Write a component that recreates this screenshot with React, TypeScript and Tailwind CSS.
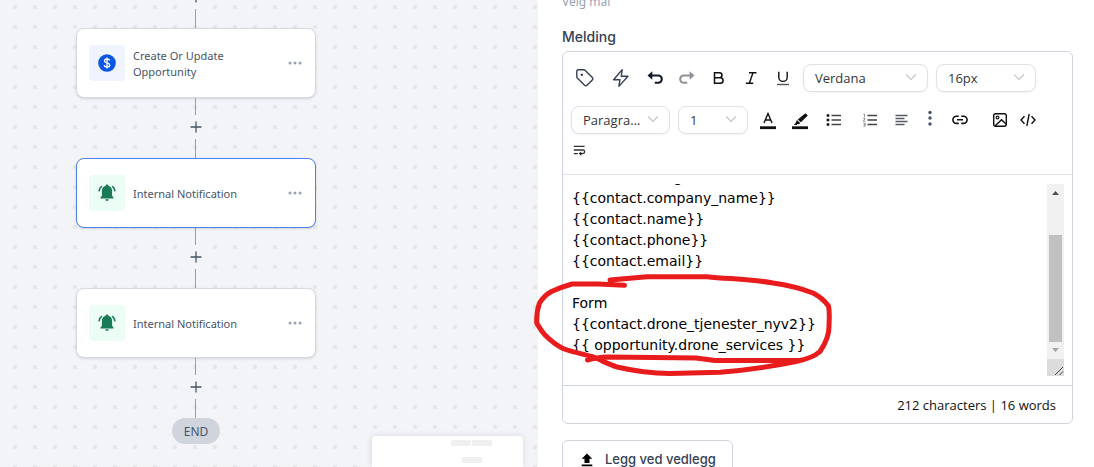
import type { ReactNode } from 'react';

const bodyText = `Drone bestilling
{{contact.company_name}}
{{contact.name}}
{{contact.phone}}
{{contact.email}}

Form
{{contact.drone_tjenester_nyv2}}
{{ opportunity.drone_services }}`;

function BellIcon() {
  return (
    <svg width="20" height="20" viewBox="0 0 20 20" fill="#1b7a58">
      <path d="M10 1.6c.8 0 1.3.5 1.4 1.2 2.3.6 3.7 2.5 3.7 5v5l1.4 1.6v1H3.5v-1l1.4-1.6v-5c0-2.5 1.4-4.4 3.7-5 .1-.7.6-1.2 1.4-1.2zM8.3 16.3h3.4c0 1-.7 1.7-1.7 1.7s-1.7-.7-1.7-1.7z" />
      <path d="M4.9 3.2C3.2 4.400 2.200 6.200 2 8.300M15.100 3.200c1.700 1.200 2.700 3 2.900 5.100" fill="none" stroke="#1b7a58" strokeWidth="1.600" />
    </svg>
  );
}

function DollarIcon() {
  return (
    <svg width="20" height="20" viewBox="0 0 20 20" fill="none">
      <circle cx="10" cy="10" r="8.800" fill="#0b57e3" />
      <path d="M12.600 7.700c-.2-1.100-1.200-1.700-2.600-1.700s-2.500.7-2.500 1.900c0 2.700 5.200 1.300 5.200 4.100 0 1.200-1.100 2-2.700 2-1.500 0-2.600-.7-2.800-1.900M10 4.500v11" stroke="#fff" strokeWidth="1.300" />
    </svg>
  );
}

function Connector() {
  return (
    <div className="flex h-15 flex-col items-center pr-px">
      <div className="h-[17px] w-px bg-[#98a0a8]" />
      <button type="button" aria-label="Add step" className="flex h-6 w-6 items-center justify-center bg-[#f2f4f7]">
        <svg width="12" height="12" viewBox="0 0 12 12" stroke="#475467" strokeWidth="1.3">
          <path d="M6 .5v11M.5 6h11" />
        </svg>
      </button>
      <div className="w-px flex-1 bg-[#98a0a8]" />
    </div>
  );
}

function StepCard({ label, tint, active, children }: { label: string; tint: string; active?: boolean; children: ReactNode }) {
  return (
    <div
      className={`flex h-[70px] w-60 items-center rounded-lg border bg-white px-3 shadow-sm ${active ? 'border-[#4d82ee]' : 'border-[#d5d9e0]'}`}
    >
      <div className={`flex h-9 w-9 shrink-0 items-center justify-center rounded ${tint}`}>{children}</div>
      <p className="ml-2 w-32 pt-px text-[11px] leading-4 text-[#475467]">{label}</p>
      <button type="button" aria-label="Step options" className="ml-auto">
        <svg width="16" height="16" viewBox="0 0 16 16" fill="#98a2b3">
          <circle cx="3" cy="8" r="1.500" />
          <circle cx="8" cy="8" r="1.500" />
          <circle cx="13" cy="8" r="1.500" />
        </svg>
      </button>
    </div>
  );
}

function Dropdown({ label, value, width }: { label: string; value: string; width: string }) {
  return (
    <div className={`relative ${width}`}>
      <select
        aria-label={label}
        className="h-7 w-full appearance-none overflow-hidden rounded-lg border border-[#dfe1e6] bg-white pt-[2px] pr-6 pl-[11px] font-['Open_Sans',sans-serif] text-[13px] text-ellipsis whitespace-nowrap text-[#333639] shadow-xs"
      >
        <option>{value}</option>
      </select>
      <svg className="pointer-events-none absolute top-2 right-3" width="10" height="10" viewBox="0 0 10 10" fill="none" stroke="#c2c2c8" strokeWidth="1.100">
        <path d="M0 2.500l5 5 5-5" />
      </svg>
    </div>
  );
}

function Tool({ label, width = 'w-8', children }: { label: string; width?: string; children: ReactNode }) {
  return (
    <button type="button" aria-label={label} className={`flex h-7 shrink-0 items-center justify-center ${width}`}>
      <svg width="20" height="20" viewBox="0 0 20 20" fill="none" stroke="#101010" strokeWidth="1.400">
        {children}
      </svg>
    </button>
  );
}

function Toolbar() {
  return (
    <div className="flex flex-col border-b border-[#e0e2e6] px-2 pt-3 pb-[10px]">
      <div className="flex items-center">
        <Tool label="Tags" width="w-7">
          <path d="M1.800 3.300v5.500c0 .5.200.9.500 1.200l7.300 7.300c.7.700 1.700.7 2.400 0l5.300-5.300c.7-.7.700-1.700 0-2.400L10 2.300c-.3-.3-.7-.5-1.200-.5H3.300c-.8 0-1.500.7-1.500 1.500z" stroke="#344054" strokeLinejoin="round" />
          <circle cx="6.800" cy="6.800" r="1.200" fill="#344054" stroke="none" />
        </Tool>
        <Tool label="Triggers" width="w-11">
          <path d="M11.200 1.600L2.600 11.800h6.300l-1 6.600 9-10.200h-6.600l.9-6.600z" stroke="#344054" strokeLinejoin="round" />
        </Tool>
        <Tool label="Undo" width="w-6">
          <path d="M4 7.500h9.200a3.600 3.600 0 010 7.200h-3.400" stroke="#101828" strokeWidth="2.100" />
          <path d="M7.300 3.200v8.600L2.500 7.500z" fill="#101828" stroke="none" />
        </Tool>
        <Tool label="Redo" width="w-10">
          <path d="M16 7.500H6.800a3.600 3.600 0 000 7.200h3.400" stroke="#8e9196" strokeWidth="2.100" />
          <path d="M12.700 3.200v8.600l4.800-4.300z" fill="#8e9196" stroke="none" />
        </Tool>
        <Tool label="Bold" width="w-6">
          <path d="M5.500 4.700h5a2.500 2.500 0 010 5h-5zM5.500 9.700h5.800a2.800 2.800 0 010 5.600H5.500z" strokeWidth="1.500" />
        </Tool>
        <Tool label="Italic" width="w-10">
          <path d="M8 4.700h7.500M4.800 15.300h7.400M12 4.700L8.300 15.300" />
        </Tool>
        <Tool label="Underline" width="w-6">
          <path d="M5.800 3.700v5.500a4.200 4.200 0 008.400 0V3.700" />
          <path d="M4 16.500h12" stroke="#555" />
        </Tool>
        <div className="ml-2 flex gap-2">
          <Dropdown label="Font family" value="Verdana" width="w-[125px]" />
          <Dropdown label="Font size" value="16px" width="w-[100px]" />
        </div>
      </div>
      <div className="mt-[14px] flex items-center">
        <div className="flex gap-2">
          <Dropdown label="Block type" value="Paragraph" width="w-[99px]" />
          <Dropdown label="Line height" value="1" width="w-[70px]" />
        </div>
        <Tool label="Text colour" width="ml-1 w-8">
          <path d="M6 13l4-9.500L14 13M7.500 10h5" strokeWidth="1.400" />
          <path d="M2 17.700h16" strokeWidth="2.800" />
        </Tool>
        <Tool label="Highlight">
          <path d="M15.500 3.200l2.300 2.200-6.900 6.900-3.200-2.700zM6.800 10l3.500 3-1.600 1.200-1.300-.1-.7.800H3.900l1.900-2.100z" fill="#101010" stroke="none" />
          <path d="M2 17.700h16" strokeWidth="2.800" />
        </Tool>
        <Tool label="Bulleted list" width="w-9">
          <path d="M7.500 5.500H17M7.500 10H17M7.500 14.500H17" stroke="#444" strokeWidth="1.400" />
          <path d="M2.700 5.500h2.600M2.700 10h2.600M2.700 14.500h2.600" strokeWidth="2.600" />
        </Tool>
        <Tool label="Numbered list" width="w-9">
          <path d="M7.500 5.500H17M7.500 10H17M7.500 14.500H17" stroke="#444" strokeWidth="1.400" />
          <path d="M3.300 4.200h1.200v3M3.300 8.500h1.800l-1.800 2.700h2M3.300 13.200h1.900v3H3.300m.5-1.500h1.400" stroke="#777" strokeWidth=".8" />
        </Tool>
        <Tool label="Align" width="w-7">
          <path d="M3.500 5.500h12M3.500 8.500h9M3.500 11.500h12M3.500 14.500h9" stroke="#555b64" strokeWidth="1.400" />
        </Tool>
        <Tool label="More" width="w-7">
          <g fill="#475467" stroke="none">
            <circle cx="10" cy="2.500" r="1.700" />
            <circle cx="10" cy="8" r="1.700" />
            <circle cx="10" cy="14" r="1.700" />
          </g>
        </Tool>
        <Tool label="Link">
          <path d="M8.700 6.200H6.500a3.600 3.600 0 000 7.200h2.200M11.300 6.200h2.200a3.600 3.600 0 010 7.200h-2.200M7 9.800h6" strokeWidth="1.600" />
        </Tool>
        <Tool label="Image" width="ml-2 w-8">
          <rect x="3.700" y="3.700" width="12.600" height="12.600" rx="2" />
          <circle cx="7.500" cy="7.500" r="1.400" strokeWidth="1.200" />
          <path d="M5 16l6.500-6.300 4.800 4.600" />
        </Tool>
        <Tool label="Code" width="w-6">
          <path d="M6.500 6.300L3 10l3.500 3.700M13.500 6.300L17 10l-3.500 3.700M11.200 4L8.800 16" />
        </Tool>
      </div>
      <div className="mt-[2px] flex">
        <Tool label="Text wrap" width="w-4">
          <path d="M3.500 5.500H17M3.500 10h11.300a2.200 2.200 0 010 4.500h-3M3.500 14.500h5" stroke="#333" strokeWidth="1.600" />
          <path d="M12.800 11.800v5.400L9.800 14.500z" fill="#101010" stroke="none" />
        </Tool>
      </div>
    </div>
  );
}

function Scrollbar() {
  return (
    <div className="flex w-[17px] shrink-0 flex-col">
      <div className="flex flex-1 flex-col items-center bg-[#f1f1f1]">
        <svg className="mt-[7px]" width="7" height="4" viewBox="0 0 7 4" fill="#505050">
          <path d="M3.500 0L7 4H0z" />
        </svg>
        <div className="mt-10 mb-[6px] w-[13px] flex-1 bg-[#c1c1c1]" />
        <svg className="mb-[7px]" width="7" height="4" viewBox="0 0 7 4" fill="#a3a3a3">
          <path d="M0 0h7L3.500 4z" />
        </svg>
      </div>
      <svg className="bg-[#dcdcdc]" width="17" height="17" viewBox="0 0 17 17" stroke="#444">
        <path d="M8 16l8-8M12.500 16l3.500-3.500" />
      </svg>
    </div>
  );
}

export default function App() {
  return (
    <main className="grid h-screen grid-cols-[538fr_556fr] grid-rows-1 overflow-hidden bg-white font-['Noto_Sans',sans-serif]">
      <section className="relative overflow-hidden bg-[#f2f4f7] bg-[radial-gradient(circle_at_10px_10px,#e6e7e8_2px,transparent_2.500px)] bg-[length:20px_20px] bg-[position:5px_-3px]">
        <div className="-mt-8 ml-[76px] flex w-60 flex-col items-center">
          <Connector />
          <StepCard label="Create Or Update Opportunity" tint="bg-[#eff4ff]">
            <DollarIcon />
          </StepCard>
          <Connector />
          <StepCard label="Internal Notification" tint="bg-[#ecfdf5]" active>
            <BellIcon />
          </StepCard>
          <Connector />
          <StepCard label="Internal Notification" tint="bg-[#ecfdf5]">
            <BellIcon />
          </StepCard>
          <Connector />
          <div className="flex h-[26px] w-12 items-center justify-center rounded-full bg-[#d0d5dd] pt-[2px] text-xs text-[#475467]">END</div>
        </div>
        {/* minimap */}
        <div className="absolute right-[15px] bottom-0 flex h-[31px] w-[151px] flex-col items-center rounded-t bg-white pt-1 pl-12 shadow-[0_0_6px_rgba(0,0,0,0.12)]">
          <div className="flex gap-px">
            <div className="h-[6px] w-5 bg-[#f0f0f0]" />
            <div className="h-[6px] w-5 bg-[#f0f0f0]" />
          </div>
          <div className="mt-[11px] h-[6px] w-5 bg-[#f0f0f0]" />
        </div>
      </section>

      <section className="relative pr-[21px] pl-6">
        <p className="-mt-2 h-5 text-xs leading-5 text-[#98a2b3]">Velg mål</p>
        <label htmlFor="message" className="mt-[13px] block font-['Inter',sans-serif] text-sm leading-6 font-medium text-[#344054]">
          Melding
        </label>
        <div className="mt-[2px] rounded-md border border-[#d0d5dd]">
          <Toolbar />
          <div className="flex h-[210px] py-[9px] pr-2 pl-[9px]">
            <div className="flex-1 overflow-hidden">
              <textarea
                id="message"
                defaultValue={bodyText}
                className="-mt-[17px] block h-[209px] w-full resize-none overflow-hidden font-['DejaVu_Sans',sans-serif] text-sm leading-[21px] text-black outline-none"
              />
            </div>
            <Scrollbar />
          </div>
          <div className="border-t border-[#d0d5dd] px-4 pt-[9px] pb-[7px] text-right font-['Open_Sans',sans-serif] text-[13px] leading-[21px] text-[#101010]">
            212 characters | 16 words
          </div>
        </div>
        <button
          type="button"
          className="mt-4 flex h-10 items-center gap-[10px] rounded-md border border-[#d0d5dd] px-4 font-['Inter',sans-serif] text-[13px] font-medium text-[#344054]"
        >
          <svg width="16" height="16" viewBox="0 0 16 16" fill="#000">
            <path d="M8 1.500l5.300 5.200h-2.800v4.300h-5V6.700H2.700zM2.700 12.500h10.600v1.700H2.700z" />
          </svg>
          Legg ved vedlegg
        </button>
        {/* red pen marks */}
        <svg className="pointer-events-none absolute top-[270px] -left-2" width="310" height="110" viewBox="0 0 310 110" fill="none" stroke="#e81c1c" strokeWidth="5" strokeLinecap="round" strokeLinejoin="round">
          <path d="M94.500 15.300L68 14H42C33 16.500 27 19 21.500 21.500C15 25 12 29 9.500 33C7 40 6.500 47 6.700 53C9 57 11 61 15 65C20 70 26 75 33 78.500C42 82 53 84 62 86.500C71 90 78 94 87 97C104 101 122 103.300 140 103.500L190 102.300C216 100 242 96.500 266 91.500C276 89.500 284 87 290 81.500C295 74 299 66 299 57C299 50 300 43 298.500 36C294 30 289 26 283 23C270 18 257 15 243 13C221 9 199 9 177 6.700H117L80 10" />
          <path d="M57.500 90C64 88 71 87.200 78 87L146 87.700L166 88L185 90.500L268.500 90.600" />
        </svg>
      </section>
    </main>
  );
}
